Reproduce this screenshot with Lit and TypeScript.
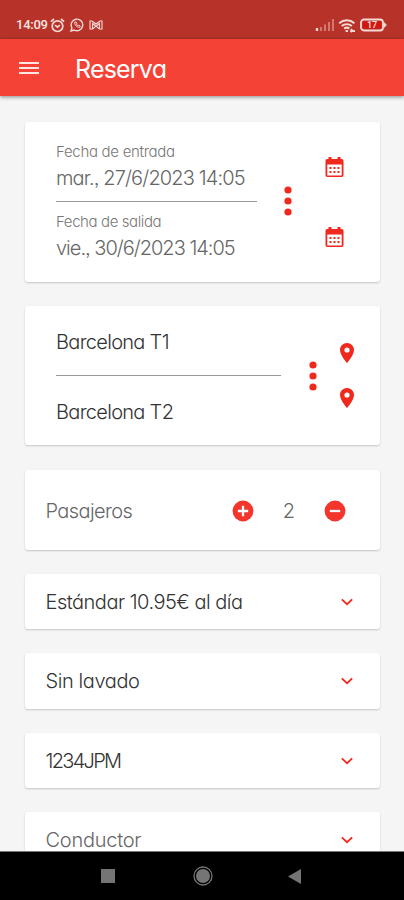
import { LitElement, html, css, svg } from "lit";
import { customElement } from "lit/decorators.js";

const calendar = html`<svg class="cal" viewBox="0 0 18 20">
  <path d="M3 0h3v2h6V0h3v2h1.2A1.8 1.8 0 0 1 18 3.8v14.4a1.8 1.8 0 0 1-1.8 1.8H1.8A1.8 1.8 0 0 1 0 18.2V3.8A1.8 1.8 0 0 1 1.8 2H3zM1.8 7.6v10.8h14.4V7.6z" fill-rule="evenodd"/>
  ${[4, 8, 12].map((x) => svg`<rect x=${x} y="10" width="2" height="2"/><rect x=${x} y="14" width="2" height="2"/>`)}
</svg>`;
const pin = html`<svg class="pin" viewBox="5 2 14 20"><path d="M12 2C8.13 2 5 5.13 5 9c0 5.25 7 13 7 13s7-7.75 7-13c0-3.87-3.13-7-7-7zm0 9.6a2.6 2.6 0 1 1 0-5.2 2.6 2.6 0 0 1 0 5.2z"/></svg>`;
const dots = html`<svg class="dots" viewBox="0 0 8 30"><circle cx="4" cy="4" r="3.6"/><circle cx="4" cy="15" r="3.6"/><circle cx="4" cy="26" r="3.6"/></svg>`;
const plus = html`<svg class="round" viewBox="0 0 22 22"><circle cx="11" cy="11" r="10.4"/><path class="mark" d="M11 5.8v10.4M5.8 11h10.4"/></svg>`;
const minus = html`<svg class="round" viewBox="0 0 22 22"><circle cx="11" cy="11" r="10.4"/><path class="mark" d="M5.8 11h10.4"/></svg>`;
const chevron = html`<svg class="chevron" viewBox="0 0 14 8"><path d="M1.8 1.4 7 6.2l5.2-4.8"/></svg>`;

@customElement("app-root")
export class AppRoot extends LitElement {
  static styles = css`
    :host { display: flex; flex-direction: column; height: 900px; overflow: hidden; background: #f5f5f5;
      font-family: Inter, "Open Sans", sans-serif; font-weight: 300; font-feature-settings: "cv11", "ss03"; color: #333; }
    * { box-sizing: border-box; }
    svg { display: block; flex: none; fill: #f0281e; }
    .status { height: 39px; flex: none; background: #b7332a; display: flex; align-items: center; padding: 11px 17px 0 16px; color: #fbe3e0; }
    .time { font: 500 13px/16px Roboto, sans-serif; letter-spacing: -0.25px; width: 34px; white-space: nowrap; }
    .status svg { fill: none; stroke: #f6d9d5; stroke-width: 1.7; }
    .left { flex: 1; display: flex; align-items: center; }
    .alarm { width: 15px; height: 15px; }
    .chat { width: 14px; height: 14px; margin-left: 5px; }
    .mail { width: 14px; height: 10px; margin-left: 5px; }
    .signal { width: 20px; height: 12px; }
    .wifi { width: 19px; height: 15px; margin-left: 3px; }
    .battery { width: 27px; height: 14px; margin-left: 3px; }
    .bar { height: 57px; flex: none; background: #f44336; display: flex; align-items: center; padding: 2px 19px 0; color: #fff;
      box-shadow: 0 1px 4px rgba(0,0,0,.45); z-index: 1; }
    .menu { width: 20px; height: 14px; margin-top: -2px; fill: none; stroke: #ffe6e2; stroke-width: 2.2; }
    .title { margin-left: 36px; font-size: 25px; font-weight: 400; line-height: 32px; letter-spacing: -0.8px; }
    .list { flex: 1; min-height: 0; overflow: hidden; padding: 26px 24px 0 25px; display: flex; flex-direction: column; }
    .card { flex: none; background: #fff; border-radius: 3px; box-shadow: 0 1px 2px rgba(0,0,0,.2); display: flex; margin-bottom: 24px; white-space: nowrap; }
    .dates { height: 160px; padding-left: 31px; }
    .col { width: 201px; padding-top: 19px; }
    .label { font-size: 15px; line-height: 21px; color: #777; letter-spacing: -0.3px; }
    .value { font-size: 20px; line-height: 31px; color: #666; letter-spacing: -0.85px; padding-top: 1px; height: 31px; }
    .label.checkout { letter-spacing: -0.4px; }
    .value.checkout { letter-spacing: -1px; }
    .rule { height: 1px; background: #999; }
    .dates .rule { margin: 8px 0 9px; }
    .dates .dots { margin: 64px 0 0 27px; }
    .icons { display: flex; flex-direction: column; }
    .dates .icons { margin: 35px 0 0 33px; gap: 50px; }
    .dots { width: 8px; height: 30px; }
    .cal { width: 19px; height: 20px; }
    .places { height: 139px; padding-left: 31px; margin-bottom: 25px; }
    .place { height: 69px; font-size: 20px; line-height: 72px; letter-spacing: -0.7px; }
    .places .place { width: 225px; }
    .places .dots { margin: 55px 0 0 28px; }
    .places .icons { margin: 37px 0 0 23px; gap: 25px; }
    .pin { width: 14px; height: 20px; }
    .row { height: 55.3px; align-items: center; padding: 1px 26px 0 20.5px; font-size: 20px; color: #333; }
    .row .text { flex: 1; letter-spacing: -0.6px; }
    .row .rate { letter-spacing: -0.5px; }
    .row .wash { letter-spacing: -0.4px; }
    .row .plate { letter-spacing: -1.7px; }
    .row .muted { letter-spacing: -0.25px; color: #666; }
    .chevron { width: 14px; height: 8px; fill: none; stroke: #f0281e; stroke-width: 1.8; }
    .passengers { height: 80px; padding-right: 34px; color: #666; }
    .round { width: 22px; height: 22px; fill: #f3352b; }
    .mark { stroke: #fff; stroke-width: 2.3; fill: none; }
    .count { width: 70px; text-align: center; color: #666; }
    .nav { height: 49px; flex: none; background: #000; border-top: 1px solid #777; display: flex; align-items: center; padding-left: 101px; }
    .nav svg { fill: #757575; }
    .square { width: 14px; height: 14px; }
    .home { width: 20px; height: 20px; margin-left: 78px; }
    .back { width: 13px; height: 15px; margin-left: 75px; }
  `;

  render() {
    return html`
      <div class="status">
        <div class="left">
          <span class="time">14:09</span>
          <svg class="alarm" viewBox="0 0 15 15"><circle cx="7.5" cy="8.2" r="5.3"/><path d="M.9 3.6 4 1M14.1 3.6 11 1M5 7.2l2.5 2 2.3-2"/></svg>
          <svg class="chat" viewBox="0 0 14 14"><path d="m1 13 .9-3.2a5.8 5.8 0 1 1 2.2 2.2z" stroke-width="1.4"/><path d="M4.8 4.2c-.6 2.6 2.3 5.3 4.8 5.2l.7-1.3-1.6-.9-.8.6-1.5-1.6.5-.7-.8-1.5z" stroke-width="1"/></svg>
          <svg class="mail" viewBox="0 0 14 10"><path d="M1 1v8h2.6V3.5L7 6.2l3.4-2.7V9H13V1h-2L7 4 3 1zM3.6 9l3.4-2.8L10.4 9" stroke-width="1.1"/></svg>
        </div>
        <svg class="signal" viewBox="0 0 20 12"><path d="M2 9v3" stroke-width="2.4"/><path d="M6 8v4M10 5.5V12M14 3v9M18 0v12" opacity=".42" stroke-width="2"/></svg>
        <svg class="wifi" viewBox="0 0 19 15"><path d="M1.2 5.2a11.6 11.6 0 0 1 15.2 0M3.7 8a8 8 0 0 1 10.2 0M6.2 10.6a4.4 4.4 0 0 1 5.2 0" stroke-width="2"/><path d="M7.6 13h2.4M13 13h4M14 11l-1 2 1 1" stroke-width="1.9"/></svg>
        <svg class="battery" viewBox="0 0 27 14"><rect x="1" y="1.5" width="22" height="11" rx="3" stroke-width="1.8"/><rect x="3" y="3.5" width="18" height="7" fill="#d3150f" stroke="none"/><path d="M24 4.5 26.3 7 24 9.5z" fill="#f6d9d5" stroke-width="1"/><text x="12" y="10.2" text-anchor="middle" font-family="Roboto" font-size="9" font-weight="500" fill="#ffe4e0" stroke="none">17</text></svg>
      </div>
      <div class="bar">
        <svg class="menu" viewBox="0 0 20 14"><path d="M0 2h20M0 7h20M0 12h20"/></svg>
        <div class="title">Reserva</div>
      </div>
      <div class="list">
        <div class="card dates">
          <div class="col">
            <div class="label">Fecha de entrada</div>
            <div class="value">mar., 27/6/2023 14:05</div>
            <div class="rule"></div>
            <div class="label checkout">Fecha de salida</div>
            <div class="value checkout">vie., 30/6/2023 14:05</div>
          </div>
          ${dots}
          <div class="icons">${calendar}${calendar}</div>
        </div>
        <div class="card places">
          <div class="place-col">
            <div class="place">Barcelona T1</div>
            <div class="rule"></div>
            <div class="place">Barcelona T2</div>
          </div>
          ${dots}
          <div class="icons">${pin}${pin}</div>
        </div>
        <div class="card row passengers"><span class="text">Pasajeros</span>${plus}<span class="count">2</span>${minus}</div>
        <div class="card row"><span class="text rate">Estándar 10.95€ al día</span>${chevron}</div>
        <div class="card row"><span class="text wash">Sin lavado</span>${chevron}</div>
        <div class="card row"><span class="text plate">1234JPM</span>${chevron}</div>
        <div class="card row"><span class="text muted">Conductor</span>${chevron}</div>
      </div>
      <div class="nav">
        <svg class="square" viewBox="0 0 14 14"><rect width="14" height="14"/></svg>
        <svg class="home" viewBox="0 0 20 20"><circle cx="10" cy="10" r="7"/><circle cx="10" cy="10" r="9" fill="none" stroke="#757575" stroke-width="1.3"/></svg>
        <svg class="back" viewBox="0 0 13 15"><path d="M13 0v15L0 7.5z"/></svg>
      </div>
    `;
  }
}
